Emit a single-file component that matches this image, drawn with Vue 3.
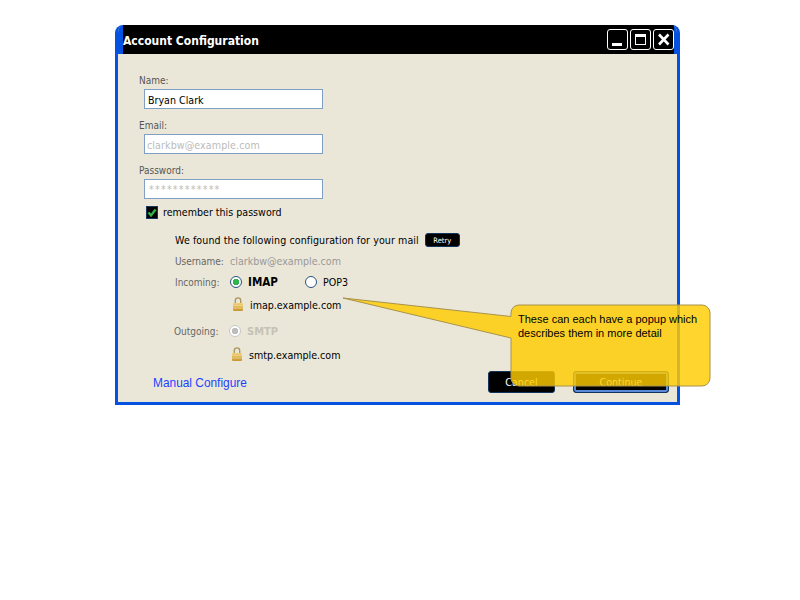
<script setup>
const winButtons = ['min', 'max', 'close']
</script>

<template>
  <div class="page">
    <section class="dialog">
      <header class="titlebar">
        <div class="titlebar-inner">
          <span class="title">Account Configuration</span>
          <div class="winbtns">
            <span v-for="b in winButtons" :key="b" class="winbtn">
              <svg width="21" height="21" viewBox="0 0 21 21">
                <rect x="0.5" y="0.5" width="20" height="20" rx="2.5" fill="none" stroke="#fff" />
                <rect v-if="b === 'min'" x="5" y="14" width="10" height="3" fill="#fff" />
                <g v-if="b === 'max'" fill="none" stroke="#fff">
                  <rect x="5.5" y="5.5" width="10" height="10" />
                  <rect x="5" y="5" width="11" height="3" fill="#fff" stroke="none" />
                </g>
                <path v-if="b === 'close'" d="M6 5.5 L15.5 15.5 M15.5 5.5 L6 15.5" stroke="#fff" stroke-width="2.6" />
              </svg>
            </span>
          </div>
        </div>
      </header>

      <div class="body">
        <label class="label">Name:</label>
        <div class="input">Bryan Clark</div>
        <label class="label">Email:</label>
        <div class="input ghost">clarkbw@example.com</div>
        <label class="label">Password:</label>
        <div class="input ghost pw">************</div>

        <div class="remember">
          <span class="check">
            <svg width="12" height="13" viewBox="0 0 12 13">
              <rect x="0.5" y="0.5" width="11" height="12" fill="#000" stroke="#17385a" />
              <path d="M2.5 6.5 L5 9.4 L9.6 3.4" fill="none" stroke="#2fb344" stroke-width="2.4" />
            </svg>
          </span>
          remember this password
        </div>

        <div class="config">
          <div class="found">
            <span class="found-text">We found the following configuration for your mail</span>
            <span class="retry">Retry</span>
          </div>
          <div class="row username">
            <span class="key">Username:</span>
            <span class="muted">clarkbw@example.com</span>
          </div>
          <div class="row incoming">
            <span class="key">Incoming:</span>
            <span class="radio on"></span>
            <b class="proto imap-name">IMAP</b>
            <span class="radio pop"></span>
            <span>POP3</span>
          </div>
          <div class="server imap">
            <svg class="lock" width="10" height="14" viewBox="0 0 10 14">
              <defs>
                <linearGradient id="gold-a" x1="0" y1="0" x2="0" y2="1">
                  <stop offset="0" stop-color="#f3d27a" />
                  <stop offset="1" stop-color="#c8952e" />
                </linearGradient>
              </defs>
              <path d="M2.3 7 V3.6 a2.7 2.7 0 0 1 5.4 0 V7" fill="none" stroke="#a8975f" stroke-width="1.4" />
              <rect x="0" y="6" width="10" height="8" rx="1" fill="url(#gold-a)" />
              <path d="M0 8.5 H10 M0 11 H10" stroke="#f6e2a0" stroke-opacity="0.7" stroke-width="0.8" />
            </svg>
            <span>imap.example.com</span>
          </div>
          <div class="row outgoing">
            <span class="key">Outgoing:</span>
            <span class="radio off"></span>
            <b class="proto disabled">SMTP</b>
          </div>
          <div class="server smtp">
            <svg class="lock" width="10" height="14" viewBox="0 0 10 14">
              <defs>
                <linearGradient id="gold-b" x1="0" y1="0" x2="0" y2="1">
                  <stop offset="0" stop-color="#f3d27a" />
                  <stop offset="1" stop-color="#c8952e" />
                </linearGradient>
              </defs>
              <path d="M2.3 7 V3.6 a2.7 2.7 0 0 1 5.4 0 V7" fill="none" stroke="#a8975f" stroke-width="1.4" />
              <rect x="0" y="6" width="10" height="8" rx="1" fill="url(#gold-b)" />
              <path d="M0 8.5 H10 M0 11 H10" stroke="#f6e2a0" stroke-opacity="0.7" stroke-width="0.8" />
            </svg>
            <span>smtp.example.com</span>
          </div>
        </div>

        <footer class="footer">
          <span class="link">Manual Configure</span>
          <div class="actions">
            <span class="btn cancel">Cancel</span>
            <span class="btn continue">Continue</span>
          </div>
        </footer>
      </div>
    </section>

    <svg class="callout" width="800" height="600" viewBox="0 0 800 600">
      <path
        d="M343 298 L511 316.5 V313 a8 8 0 0 1 8 -8 H702 a8 8 0 0 1 8 8 V378 a8 8 0 0 1 -8 8 H519 a8 8 0 0 1 -8 -8 V338 Z"
        fill="#ffcc00" fill-opacity="0.82" stroke="#a8924a" stroke-width="1" />
    </svg>
    <p class="callout-text">These can each have a popup which describes them in more detail</p>
  </div>
</template>

<style scoped>
.page {
  position: relative;
  width: 800px;
  height: 600px;
  background: #fff;
  overflow: hidden;
  font-family: "DejaVu Sans Condensed", "Noto Sans", sans-serif;
  font-size: 10.6px;
  color: #000;
}
.dialog {
  position: absolute;
  left: 115px;
  top: 25px;
  width: 565px;
  height: 380px;
  box-sizing: border-box;
  border: 3px solid #0652e0;
  border-top: 0;
  border-radius: 8px 8px 0 0;
  background: #ebe7d8;
  overflow: hidden;
}
.titlebar {
  height: 29px;
  background: #0652e0;
}
.titlebar-inner {
  margin: 0 3px 0 5px;
  height: 29px;
  background: #000;
  display: flex;
  align-items: center;
  justify-content: space-between;
}
.title {
  color: #fff;
  font-weight: 700;
  font-size: 12px;
  padding-top: 2px;
}
.winbtns {
  display: flex;
  gap: 2px;
}
.winbtn {
  display: block;
  height: 21px;
}
.winbtn svg {
  display: block;
}
.body {
  position: relative;
  display: flex;
  flex-direction: column;
  padding: 20px 0 0 21px;
}
.label {
  display: block;
  height: 15px;
  line-height: 13px;
  font-size: 10px;
  color: #555;
}
.input {
  box-sizing: border-box;
  width: 179px;
  height: 20px;
  margin: 0 0 10px 5px;
  padding-left: 3px;
  line-height: 21px;
  background: #fff;
  border: 1px solid #7fa0c4;
}
.ghost {
  color: #bbb;
  padding-left: 2px;
  letter-spacing: 0.1px;
}
.pw {
  padding-left: 4px;
  line-height: 19px;
  letter-spacing: 1.2px;
}
.remember {
  display: flex;
  align-items: center;
  gap: 5px;
  margin: -4px 0 0 7px;
  height: 14px;
}
.check {
  display: block;
  height: 13px;
}
.check svg {
  display: block;
}
.config {
  margin: 13px 0 0 36px;
}
.found {
  display: flex;
  align-items: center;
  gap: 6px;
  height: 16px;
}
.found-text {
  letter-spacing: 0.08px;
}
.retry {
  width: 35px;
  height: 14px;
  line-height: 13px;
  text-align: center;
  font-size: 7.5px;
  color: #fff;
  background: #000;
  border: 1px solid #12345c;
  border-radius: 3px;
  box-sizing: border-box;
}
.row {
  display: flex;
  align-items: center;
  height: 16px;
}
.key {
  width: 55px;
  font-size: 10px;
  color: #666;
}
.muted {
  color: #999;
}
.username,
.incoming {
  margin-top: 5px;
}
.radio {
  display: block;
  box-sizing: border-box;
  width: 12px;
  height: 12px;
  border-radius: 50%;
  background: #fff;
  border: 1.5px solid #28527f;
}
.radio.on {
  background: radial-gradient(circle, #31b44a 0 3px, #fff 3.5px);
}
.radio.off {
  border-color: #c8c8c8;
  background: radial-gradient(circle, #bdbdbd 0 3px, #fff 3.5px);
}
.radio.pop {
  margin-left: 27px;
  margin-right: 6px;
}
.proto {
  margin-left: 6px;
}
.imap-name {
  font-size: 11.6px;
}
.disabled {
  font-size: 11px;
  color: #c4c2b6;
}
.server {
  display: flex;
  align-items: center;
  gap: 7px;
  height: 16px;
}
.imap {
  margin: 7px 0 0 58px;
}
.smtp {
  margin: 8px 0 0 57px;
}
.outgoing {
  margin: 10px 0 0 -1px;
}
.lock {
  display: block;
  margin-top: -2px;
}
.footer {
  position: absolute;
  top: 317px;
  left: 35px;
  right: 8px;
  display: flex;
  align-items: center;
  justify-content: space-between;
}
.link {
  font-family: "Liberation Sans", sans-serif;
  font-size: 11.9px;
  color: #1c3fff;
  margin-top: 2px;
}
.actions {
  display: flex;
  gap: 18px;
}
.btn {
  box-sizing: border-box;
  height: 22px;
  line-height: 20px;
  text-align: center;
  color: #fff;
  background: #000;
  border-radius: 3px;
}
.cancel {
  width: 67px;
  border: 1px solid #12345c;
}
.continue {
  width: 96px;
  border: 1px solid #12345c;
  box-shadow: inset 0 0 0 2px #5a8ad8;
}
.callout {
  position: absolute;
  left: 0;
  top: 0;
  pointer-events: none;
}
.callout-text {
  position: absolute;
  left: 518px;
  top: 312px;
  width: 186px;
  margin: 0;
  font-family: "Liberation Sans", sans-serif;
  font-size: 11px;
  line-height: 14px;
  color: #000;
}
</style>
